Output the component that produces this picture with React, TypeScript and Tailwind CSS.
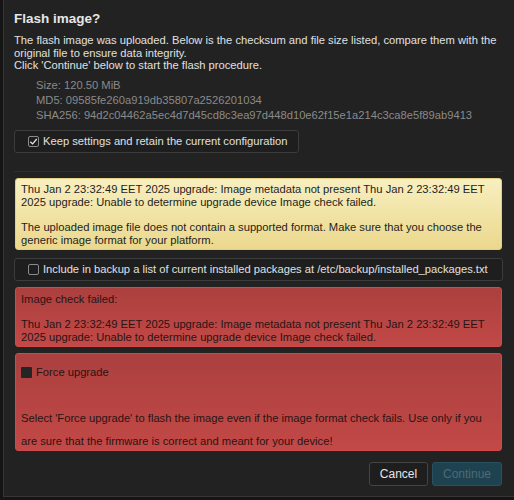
export default function App() {
  return (
    <div className="w-[514px] h-[500px] overflow-hidden bg-[#151515] font-['Liberation_Sans',Arial,sans-serif]">
      <div className="ml-[3px] h-[497px] border-l border-b border-[#363636] bg-[#222222] pl-[10px] pr-[11px]">
        {/* Header */}
        <h2 className="pt-[6px] text-[13.5px] font-bold leading-[26px] text-[#e6e6e6]">Flash image?</h2>
        <p className="mt-[2px] text-[11.2px] leading-[12.7px] text-[#e0e0e0]">
          The flash image was uploaded. Below is the checksum and file size listed, compare them with the original file to ensure data integrity.
          <br />
          Click 'Continue' below to start the flash procedure.
        </p>

        {/* Checksums */}
        <ul className="mt-[6px] pl-[22px] text-[11.2px] leading-[15px] text-[#8a8a8a]">
          <li>Size: 120.50 MiB</li>
          <li>MD5: 09585fe260a919db35807a2526201034</li>
          <li>SHA256: 94d2c04462a5ec4d7d45cd8c3ea97d448d10e62f15e1a214c3ca8e5f89ab9413</li>
        </ul>

        {/* Keep settings */}
        <label className="mt-[7px] flex h-[23px] w-[285px] items-center gap-[4px] whitespace-nowrap rounded-[3px] border border-[#3c3c3c] bg-[#1e1e1e] pl-[13px] text-[11.2px] text-[#e0e0e0]">
          <span className="flex h-[11px] w-[11px] shrink-0 items-center justify-center rounded-[2px] border border-[#8a8a8a]">
            <svg viewBox="0 0 10 10" className="h-[9px] w-[9px]">
              <path d="M1.5 5.2 L4 7.6 L8.6 2.2" fill="none" stroke="#e6e6e6" strokeWidth="1.4" />
            </svg>
          </span>
          Keep settings and retain the current configuration
        </label>

        <div className="mt-[18px] h-px bg-[#2e2e2e]" />

        {/* Warning */}
        <div className="mt-[6px] ml-px mr-[1px] rounded-[3px] border border-[#e2cf83] bg-gradient-to-b from-[#f8efc0] to-[#ebd88c] px-[5px] pt-[4px] pb-[2px] text-[11.2px] leading-[12.7px] text-[#1e1e1e]">
          <p>Thu Jan 2 23:32:49 EET 2025 upgrade: Image metadata not present Thu Jan 2 23:32:49 EET 2025 upgrade: Unable to determine upgrade device Image check failed.</p>
          <p className="mt-[12.7px]">The uploaded image file does not contain a supported format. Make sure that you choose the generic image format for your platform.</p>
        </div>

        {/* Include packages */}
        <label className="mt-[8px] flex h-[23px] items-center gap-[4px] whitespace-nowrap rounded-[3px] border border-[#3c3c3c] bg-[#1e1e1e] pl-[13px] text-[11.2px] text-[#e0e0e0]">
          <span className="h-[11px] w-[11px] shrink-0 rounded-[2px] border border-[#8a8a8a]" />
          Include in backup a list of current installed packages at /etc/backup/installed_packages.txt
        </label>

        {/* Error */}
        <div className="mt-[6px] ml-px mr-[1px] rounded-[3px] border border-[#cf4a48] bg-gradient-to-b from-[#ab403e] to-[#c24947] px-[5px] pt-[5px] pb-[3px] text-[11.2px] leading-[12.7px] text-[#2a1414]">
          <p>Image check failed:</p>
          <p className="mt-[12.7px]">Thu Jan 2 23:32:49 EET 2025 upgrade: Image metadata not present Thu Jan 2 23:32:49 EET 2025 upgrade: Unable to determine upgrade device Image check failed.</p>
        </div>

        {/* Force upgrade */}
        <div className="mt-[6px] ml-px mr-[1px] h-[98px] rounded-[3px] border border-[#cf4a48] bg-gradient-to-b from-[#ab403e] to-[#c24947] px-[5px] pt-[10px] text-[11.2px] text-[#2a1414]">
          <label className="flex items-center gap-[4px]">
            <span className="h-[11px] w-[11px] rounded-[1px] bg-[#252525]" />
            Force upgrade
          </label>
          <p className="mt-[26px] leading-[22.7px]">
            Select 'Force upgrade' to flash the image even if the image format check fails. Use only if you are sure that the firmware is correct and meant for your device!
          </p>
        </div>

        {/* Actions */}
        <div className="mt-[11px] mr-[1px] flex justify-end gap-[4px]">
          <button className="h-[24px] w-[59px] rounded-[3px] border border-[#444] bg-[#1e1e1e] text-[12px] text-[#e6e6e6]">Cancel</button>
          <button className="h-[24px] w-[70px] rounded-[3px] border border-[#2a5060] bg-[#1f4251] text-[12px] text-[#4e6a75]">Continue</button>
        </div>
      </div>
    </div>
  );
}
